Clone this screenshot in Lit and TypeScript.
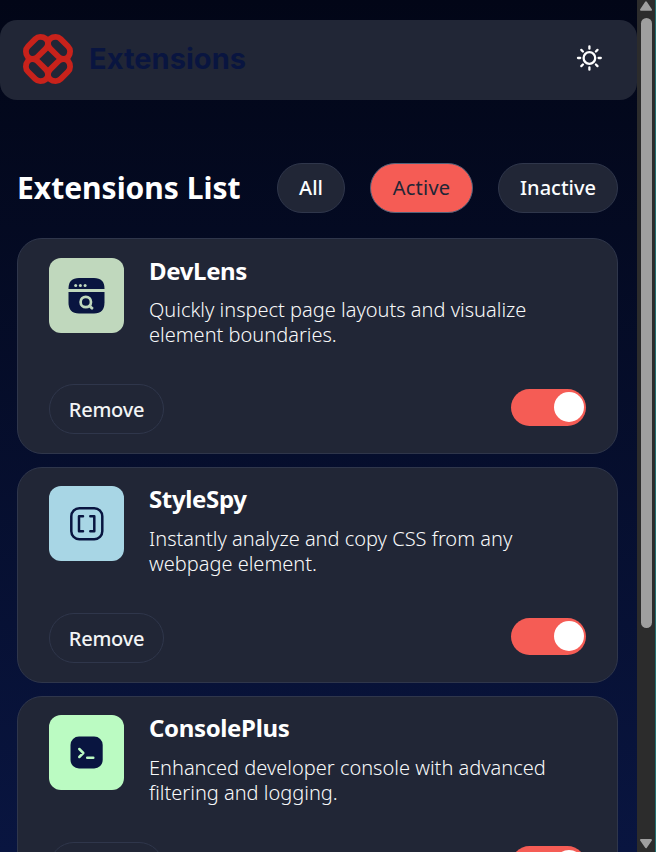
import { LitElement, html, svg, css } from "lit";
import { customElement, property, state } from "lit/decorators.js";
import { classMap } from "lit/directives/class-map.js";

type IconName = "lens" | "brackets" | "terminal";

const ICONS = {
  lens: svg`
    <path d="M19.5 31V30.5Q19.5 20 30 20H45Q55.5 20 55.5 30.5V31Z" fill="#091540"/>
    <path d="M19.5 34H55.5V44.5Q55.5 55.5 45 55.5H30Q19.5 55.5 19.5 44.5Z" fill="#091540"/>
    <g fill="#c0d8bd"><circle cx="26.7" cy="27.6" r="1.5"/><circle cx="31.4" cy="27.6" r="1.5"/><circle cx="36.1" cy="27.6" r="1.5"/></g>
    <g fill="none" stroke="#c0d8bd" stroke-width="2.7" stroke-linecap="round"><circle cx="36.8" cy="44" r="5.2"/><path d="M40.5 47.7L43 50.3"/></g>`,
  brackets: svg`
    <g fill="none" stroke="#091540" stroke-width="2.5" stroke-linecap="round" stroke-linejoin="round">
      <rect x="22.3" y="22.3" width="31" height="31" rx="8"/>
      <path d="M34 30.3H30V45.3H34M41.3 30.3H45.3V45.3H41.3"/>
    </g>`,
  terminal: svg`
    <rect x="21.5" y="21.5" width="32.2" height="32" rx="8.5" fill="#091540"/>
    <g fill="none" stroke="#bbfbc2" stroke-width="2.5" stroke-linecap="round" stroke-linejoin="round">
      <path d="M30.3 34L34.3 38L30.3 42M38.2 42.8H44.3"/>
    </g>`,
};

@customElement("toggle-switch")
class ToggleSwitch extends LitElement {
  static styles = css`
    :host { display: block; }
    .track {
      display: flex; align-items: center; justify-content: flex-end;
      box-sizing: border-box; width: 75px; height: 37px; padding: 0 2px;
      border: 0; border-radius: 19px; background: #f55c55;
    }
    .knob { width: 30px; height: 30px; border-radius: 50%; background: #fff; }
  `;
  render() {
    return html`<button class="track" role="switch" aria-checked="true" aria-label="Active"><span class="knob"></span></button>`;
  }
}

@customElement("extension-card")
class ExtensionCard extends LitElement {
  @property() name = "";
  @property() icon: IconName = "lens";
  @property({ attribute: false }) lines: string[] = [];

  static styles = css`
    :host {
      display: flex; flex-direction: column; justify-content: space-between;
      flex: none; box-sizing: border-box; height: 215.6px;
      padding: 18.3px 31px 18.6px; border: 1px solid #2f364b; border-radius: 25px;
      background: #212636;
    }
    .info { display: flex; gap: 25px; }
    .icon { flex: none; width: 75px; height: 75px; border-radius: 12px; }
    .icon svg { display: block; }
    .lens { background: #c0d8bd; }
    .brackets { background: #a8d6e5; }
    .terminal { background: #bbfbc2; }
    h2 { margin: 0; font-size: 24px; line-height: 25px; font-weight: 700; letter-spacing: -0.35px; color: #fff; white-space: nowrap; }
    p { margin: 14.7px 0 0; font-size: 20px; line-height: 25px; font-weight: 300; color: #f8f9fa; white-space: nowrap; }
    .actions { display: flex; justify-content: space-between; align-items: flex-start; }
    .remove {
      box-sizing: border-box; width: 115px; height: 50px; padding: 1px 0 0;
      border: 1px solid #2f364b; border-radius: 25px; background: transparent;
      font: 500 20px "Noto Sans", sans-serif; letter-spacing: -0.25px; color: #f2f4f5;
    }
    toggle-switch { margin-top: 4.6px; }
  `;
  render() {
    return html`
      <div class="info">
        <div class="icon ${this.icon}"><svg width="75" height="75" viewBox="0 0 75 75">${ICONS[this.icon]}</svg></div>
        <div>
          <h2>${this.name}</h2>
          <p>${this.lines[0]}<br>${this.lines[1]}</p>
        </div>
      </div>
      <div class="actions">
        <button class="remove">Remove</button>
        <toggle-switch></toggle-switch>
      </div>`;
  }
}

@customElement("app-root")
class AppRoot extends LitElement {
  @state() filter = "Active";

  static styles = css`
    :host {
      display: flex; width: 656px; height: 852px; overflow: hidden;
      background: linear-gradient(180deg, #020617, #091540);
      font-family: "Noto Sans", sans-serif;
    }
    .page { width: 637px; height: 852px; overflow: hidden; }
    header {
      display: flex; align-items: center; justify-content: space-between;
      box-sizing: border-box; height: 80px; margin-top: 20px; padding: 0 34px 0 23px;
      border-radius: 17px; background: #212636;
    }
    svg { display: block; }
    .brand { padding-bottom: 3px; }
    .sun { padding-bottom: 4px; }
    .toolbar { display: flex; align-items: center; justify-content: space-between; margin: 63px 19px 0 17px; height: 50px; }
    h1 { margin: 0; font-size: 30px; line-height: 50px; font-weight: 700; color: #fff; white-space: nowrap; }
    .filters { display: flex; gap: 25px; }
    .pill {
      box-sizing: border-box; height: 50px; padding: 0 0 2px; border: 1px solid #2f364b; border-radius: 25px;
      background: #212636; color: #fbfdfe; font: 500 20px "Noto Sans", sans-serif;
    }
    .all { width: 68px; }
    .active { width: 103px; }
    .inactive { width: 120px; }
    .selected { background: #f55c55; color: #212636; font-weight: 400; letter-spacing: 0.25px; border-color: #52627a; }
    .list { display: flex; flex-direction: column; gap: 13px; margin: 25.4px 19px 0 17px; }
    .scrollbar {
      display: flex; flex-direction: column; align-items: center; justify-content: space-between;
      box-sizing: border-box; width: 19px; height: 852px; border-right: 1px solid #1f6f70;
      background: #2c2c2c;
    }
    .thumb { flex: none; width: 11px; height: 610px; margin: 7px 0 auto; border-radius: 6px; background: #9f9f9f; }
  `;

  renderLogo() {
    const loop = "M12.2 5.1Q14.4 2.9 17.3 2.9Q20.5 2.9 22.6 4.6Q25 6.6 25 9.2Q25 12.4 22.8 14.6L14.6 22.8Q12.4 25 9.2 25Q6.6 25 4.6 22.6Q2.9 20.5 2.9 17.3Q2.9 14.4 5.1 12.2Z";
    return html`
      <svg class="brand" width="230" height="50" viewBox="0 0 230 50">
        <g fill="none" stroke="#c8221b" stroke-width="5.8">
          <path d=${loop}/>
          <path d=${loop} transform="matrix(-1 0 0 1 50 0)"/>
          <path d=${loop} transform="matrix(1 0 0 -1 0 50)"/>
          <path d=${loop} transform="matrix(-1 0 0 -1 50 50)"/>
        </g>
        <text x="66" y="35.3" font-family="Inter, sans-serif" font-weight="700" font-size="28.5" textLength="157" lengthAdjust="spacingAndGlyphs" fill="#091540">Extensions</text>
      </svg>`;
  }

  render() {
    return html`
      <div class="page">
        <header>
          ${this.renderLogo()}
          <svg class="sun" width="27" height="26" viewBox="0 0 27 26" fill="none" stroke="#fff" stroke-width="2.3" stroke-linecap="round">
            <circle cx="13.4" cy="13" r="5.8"/>
            <path d="M13.4 1.3V3.7M13.4 22.3V24.7M2 13H4.2M22.6 13H24.8M5.3 4.9L6.9 6.5M19.9 19.5L21.5 21.1M5.3 21.1L6.9 19.5M19.9 6.5L21.5 4.9"/>
          </svg>
        </header>
        <div class="toolbar">
          <h1>Extensions List</h1>
          <div class="filters">
            ${["All", "Active", "Inactive"].map((f) => html`
              <button class=${classMap({ pill: true, [f.toLowerCase()]: true, selected: f === this.filter })}
                @click=${() => { this.filter = f; }}>${f}</button>`)}
          </div>
        </div>
        <div class="list">
          <extension-card name="DevLens" icon="lens" .lines=${["Quickly inspect page layouts and visualize", "element boundaries."]}></extension-card>
          <extension-card name="StyleSpy" icon="brackets" .lines=${["Instantly analyze and copy CSS from any", "webpage element."]}></extension-card>
          <extension-card name="ConsolePlus" icon="terminal" .lines=${["Enhanced developer console with advanced", "filtering and logging."]}></extension-card>
        </div>
      </div>
      <div class="scrollbar">
        <svg width="14" height="11" viewBox="0 0 14 11"><path d="M7 2.3L12 9.8H2Z" fill="#9f9f9f" stroke="#9f9f9f" stroke-width="2" stroke-linejoin="round"/></svg>
        <div class="thumb"></div>
        <svg width="14" height="14" viewBox="0 0 14 14"><path d="M7 9.3L12 2H2Z" fill="#9f9f9f" stroke="#9f9f9f" stroke-width="2" stroke-linejoin="round"/></svg>
      </div>`;
  }
}
